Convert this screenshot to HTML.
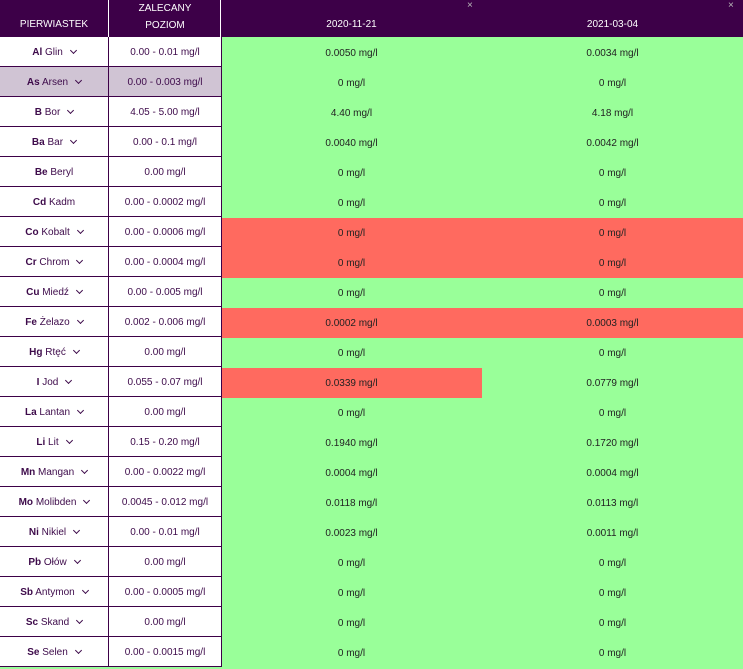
<!DOCTYPE html><html><head><meta charset="utf-8"><style>
body{margin:0;width:743px;height:669px;overflow:hidden;background:#99ff99;font-family:"Liberation Sans",sans-serif;font-size:10px;}
.h{position:absolute;top:0;height:37px;background:#3d0048;color:#fff;font-size:10px;text-align:center}
.c{position:absolute;height:29px;line-height:31px;text-align:center;color:#3d0a4a;border-bottom:1px solid #3d0048}
.a{left:0;width:108px;background:#fff}
.b{left:108px;width:112px;background:#fff;border-left:1px solid #3d0048;border-right:1px solid #3d0048}
.v{color:#222;}
.r{position:absolute;background:#ff6a5f}
.ch{display:inline-block;width:4px;height:4px;border-right:1px solid #3d0a4a;border-bottom:1px solid #3d0a4a;transform:rotate(45deg);margin-left:8px;position:relative;top:-2px}
b{font-weight:bold}
.x{position:absolute;top:0;color:#bbb;font-size:10px}
</style></head><body>
<div class="h" style="left:0;width:108px;line-height:50px">PIERWIASTEK</div>
<div class="h" style="left:108px;width:112px;border-left:1px solid #fff;line-height:17px;padding-top:0">ZALECANY<br>POZIOM</div>
<div class="h" style="left:220px;width:523px;border-left:1px solid #fff"></div>
<div class="h" style="left:221px;width:261px;line-height:50px;background:none">2020-11-21</div>
<div class="h" style="left:482px;width:261px;line-height:50px;background:none">2021-03-04</div>
<div class="x" style="left:467px">×</div><div class="x" style="left:728px">×</div>
<div id="t"></div>
<script>
var d=[["Al","Glin","0.00 - 0.01 mg/l","0.0050 mg/l","0.0034 mg/l",1,0,0],
["As","Arsen","0.00 - 0.003 mg/l","0 mg/l","0 mg/l",1,0,0,1],
["B","Bor","4.05 - 5.00 mg/l","4.40 mg/l","4.18 mg/l",1,0,0],
["Ba","Bar","0.00 - 0.1 mg/l","0.0040 mg/l","0.0042 mg/l",1,0,0],
["Be","Beryl","0.00 mg/l","0 mg/l","0 mg/l",0,0,0],
["Cd","Kadm","0.00 - 0.0002 mg/l","0 mg/l","0 mg/l",0,0,0],
["Co","Kobalt","0.00 - 0.0006 mg/l","0 mg/l","0 mg/l",1,1,1],
["Cr","Chrom","0.00 - 0.0004 mg/l","0 mg/l","0 mg/l",1,1,1],
["Cu","Miedź","0.00 - 0.005 mg/l","0 mg/l","0 mg/l",1,0,0],
["Fe","Żelazo","0.002 - 0.006 mg/l","0.0002 mg/l","0.0003 mg/l",1,1,1],
["Hg","Rtęć","0.00 mg/l","0 mg/l","0 mg/l",1,0,0],
["I","Jod","0.055 - 0.07 mg/l","0.0339 mg/l","0.0779 mg/l",1,1,0],
["La","Lantan","0.00 mg/l","0 mg/l","0 mg/l",1,0,0],
["Li","Lit","0.15 - 0.20 mg/l","0.1940 mg/l","0.1720 mg/l",1,0,0],
["Mn","Mangan","0.00 - 0.0022 mg/l","0.0004 mg/l","0.0004 mg/l",1,0,0],
["Mo","Molibden","0.0045 - 0.012 mg/l","0.0118 mg/l","0.0113 mg/l",1,0,0],
["Ni","Nikiel","0.00 - 0.01 mg/l","0.0023 mg/l","0.0011 mg/l",1,0,0],
["Pb","Ołów","0.00 mg/l","0 mg/l","0 mg/l",1,0,0],
["Sb","Antymon","0.00 - 0.0005 mg/l","0 mg/l","0 mg/l",1,0,0],
["Sc","Skand","0.00 mg/l","0 mg/l","0 mg/l",1,0,0],
["Se","Selen","0.00 - 0.0015 mg/l","0 mg/l","0 mg/l",1,0,0]];
var h="";d.forEach(function(r,i){var y=37+i*30;var bg=r[8]?"background:#d0c4d4;":"";
if(r[6])h+='<div class="r" style="left:221px;width:261px;top:'+(y+1)+'px;height:30px"></div>';
if(r[7])h+='<div class="r" style="left:482px;width:261px;top:'+(y+1)+'px;height:30px"></div>';
h+='<div class="c a" style="top:'+y+'px;'+bg+'"><b>'+r[0]+'</b> '+r[1]+(r[5]?'<span class="ch"></span>':'')+'</div>';
h+='<div class="c b" style="top:'+y+'px;'+bg+'">'+r[2]+'</div>';
h+='<div class="c v" style="left:221px;width:261px;top:'+(y+1)+'px;border:0">'+r[3]+'</div>';
h+='<div class="c v" style="left:482px;width:261px;top:'+(y+1)+'px;border:0">'+r[4]+'</div>';});
document.getElementById("t").innerHTML=h;
</script></body></html>
